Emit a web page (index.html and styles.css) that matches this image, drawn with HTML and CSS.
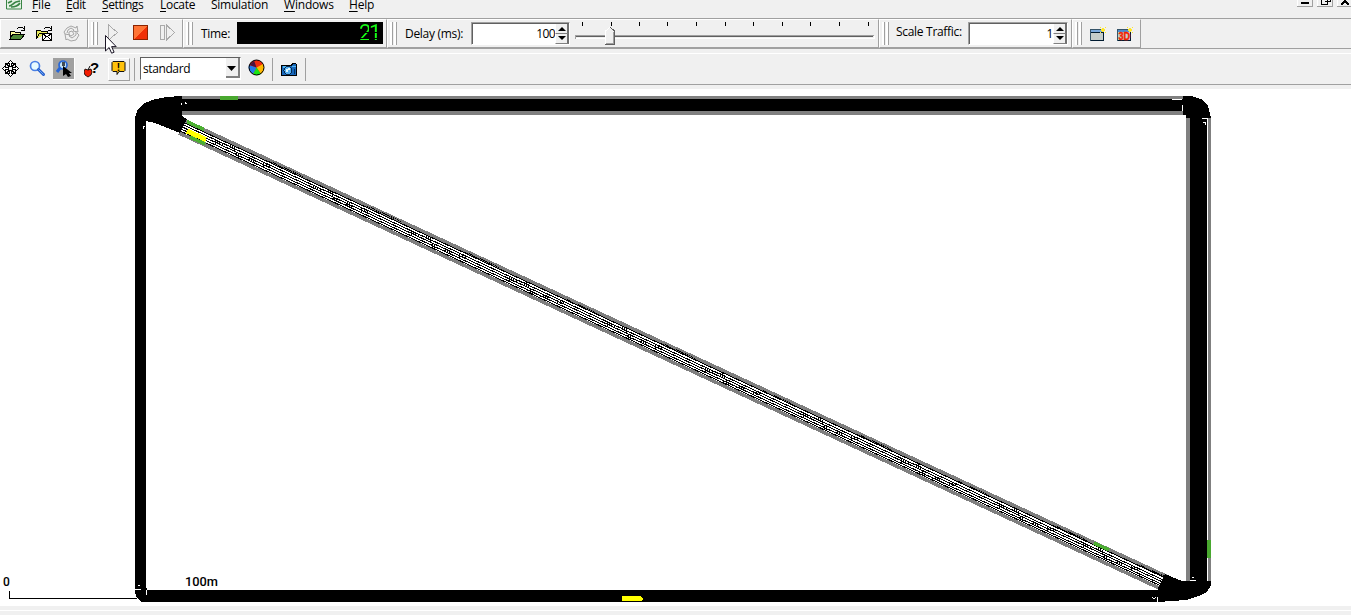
FILE: index.html
```html
<!DOCTYPE html>
<html lang="en">
<head>
<meta charset="utf-8">
<title>Traffic simulation</title>
<link rel="stylesheet" href="styles.css">
</head>
<body>
<nav class="menubar">
  <svg class="app-icon" width="17" height="10" viewBox="0 0 17 10"><path d="M.5 0v9h15V0" fill="#e4f1e4" stroke="#398444"/><path d="M2 3l4-2M3 6c3 0 4-3 7-4l4-1M5 7c4 0 7-1 9-4" fill="none" stroke="#398444" stroke-width="1.700"/></svg>
  <span class="file"><u>F</u>ile</span><span class="edit"><u>E</u>dit</span><span class="settings"><u>S</u>ettings</span><span class="locate"><u>L</u>ocate</span><span class="simulation">Simulation</span><span class="windows"><u>W</u>indows</span><span class="help"><u>H</u>elp</span>
  <div class="window-buttons">
    <svg width="54" height="7" viewBox="0 0 54 7" shape-rendering="crispEdges"><path d="M.5 0v6M20.500 0v6M40.500 0v6" stroke="#fff"/><path d="M0 6.500h15.500V0M20 6.500h15.500V0M40 6.500h16" stroke="#a0a0a0" fill="none"/><path d="M4 2h8v2H4z"/><path d="M24.500 0v4.500h6V0M28 1.500h5.500V0" fill="none" stroke="#000"/><path d="M44 5l4-4 4 4M48 1V0" fill="none" stroke="#000" stroke-width="2"/></svg>
  </div>
</nav>

<div class="toolbar main-tools">
  <section class="group g-file">
    <svg class="i-open" width="17" height="16" viewBox="0 0 17 16" shape-rendering="crispEdges"><path d="M1 13V5h4l1 1h5v3" fill="#ffff9c" stroke="#000"/><path d="M1 13l3-5h12l-4 5z" fill="#4e8736" stroke="#000"/><path d="M8 3l2-2h3l2 2M15 0v4h-3" fill="none" stroke="#000"/></svg>
    <svg class="i-openset" width="17" height="16" viewBox="0 0 17 16" shape-rendering="crispEdges"><path d="M.5 12.500v-8h4l1 1h6v2M.5 12.500l3-5h4" fill="#e5e95c" stroke="#000"/><path d="M6.500 7.500h9v7h-9z" fill="#fff" stroke="#000"/><path d="M7 8l4 3 4-3M7 14l3-3M15 14l-3-3M8 3l2-2h3l2 2M15 0v4h-3" fill="none" stroke="#000"/></svg>
    <svg class="i-reload" width="17" height="17" viewBox="0 0 17 17"><g fill="none" stroke="#a6a6a6"><path d="M2 9l-1-2 3-4 4-2 5 2 1-2 1 6-5-1 1-1-3-2-3 2-1 3M14 8l2 2-3 5-5 1-4-2-1 1-1-6 5 1-1 1 3 2 4-3v-3"/><path d="M6 7l3-1 2 3-3 2-2-1z"/></g></svg>
  </section>
  <section class="group g-run">
    <i class="grip"></i>
    <div class="play-slot">
      <svg class="i-play" width="17" height="17" viewBox="0 0 17 17" shape-rendering="crispEdges"><path d="M3.500 1l9 7.500-9 7.500z" fill="none" stroke="#aaa"/></svg>
      <svg class="pointer" width="12" height="19" viewBox="0 0 12 19"><path d="M.5.5v15.500l3.600-3.500 2.500 5.700 2.500-1-2.500-5.600h4.600z" fill="#fff" stroke="#1b1626"/></svg>
    </div>
    <svg class="i-stop" width="16" height="16" viewBox="0 0 16 16" shape-rendering="crispEdges"><path d="M.5.5h14v14H.5z" fill="#ff7435"/><path d="M14 1v13H1z" fill="#f03006"/><path d="M.5.5h14v14H.5z" fill="none" stroke="#8b2300"/></svg>
    <svg class="i-step" width="17" height="17" viewBox="0 0 17 17" shape-rendering="crispEdges"><path d="M.500 1.500h4v14h-4zM6.500 1l8 7.500-8 7.500z" fill="none" stroke="#aaa"/></svg>
  </section>
  <section class="group g-time"><i class="grip"></i><label>Time:</label><div class="lcd"><span class="two">2</span><span class="one">1</span></div></section>
  <section class="group g-delay">
    <i class="grip"></i><label>Delay (ms):</label>
    <div class="spin"><span>100</span><div class="arrows"><b><svg width="10" height="5"><path d="M1 5h8L5 1z"/></svg></b><b><svg width="10" height="5"><path d="M1 0h8L5 4z"/></svg></b></div></div>
    <svg class="slider" width="302" height="24" viewBox="0 0 302 24" shape-rendering="crispEdges"><path d="M7.500 0v4M36.500 0v4M64.500 0v4M92.500 0v4M121.500 0v4M150.500 0v4M178.500 0v4M207.500 0v4M235.500 0v4M264.500 0v4M293.500 0v4" stroke="#000"/><path d="M0 17V13h299v1H1v3z" fill="#a0a0a0"/><path d="M1 14h297v1H1z" fill="#606060"/><path d="M1 16.500h298v-3" fill="none" stroke="#fff"/><path d="M30 23V9l5-5 4 4v15z" fill="#f0f0f0"/><path d="M30.500 23V9l5-4" fill="none" stroke="#fff"/><path d="M35 5l4.500 4v13.500H30" fill="none" stroke="#606060"/><path d="M38.500 10v11.500H31" fill="none" stroke="#a0a0a0"/></svg>
  </section>
  <section class="group g-scale">
    <i class="grip"></i><label>Scale Traffic:</label>
    <div class="spin"><span>1</span><div class="arrows"><b><svg width="10" height="5"><path d="M1 5h8L5 1z"/></svg></b><b><svg width="10" height="5"><path d="M1 0h8L5 4z"/></svg></b></div></div>
  </section>
  <section class="group g-view">
    <i class="grip"></i>
    <svg class="i-view" width="18" height="17" viewBox="0 0 18 17" shape-rendering="crispEdges"><path d="M.5 3.500h13v11H.5z" fill="#c5cdca" stroke="#355469"/><path d="M1 4h12v2H1z" fill="#7aa9dc"/><path d="M1 6.500h12M13.500 5v9.500H1" stroke="#001b30" fill="none"/><path d="M12 2h2v4h-2zM11 3h4v2h-4zM15 1h1v1h-1zM10 1h1v1h-1zM10 6h1v1h-1zM15 6h1v1h-1z" fill="#ffe72c"/></svg>
    <svg class="i-view3d" width="18" height="17" viewBox="0 0 18 17" shape-rendering="crispEdges"><path d="M.5 3.500h13v11H.5z" fill="#c5cdca" stroke="#355469"/><path d="M1 4h12v2H1z" fill="#4b8bd0"/><path d="M13.500 5v9.500H1" stroke="#001b30" fill="none"/><text x="1.500" y="14" class="three-d" textLength="11.500" lengthAdjust="spacingAndGlyphs">3D</text><path d="M12 2h2v4h-2zM11 3h4v2h-4zM15 1h1v1h-1zM10 1h1v1h-1zM15 6h1v1h-1z" fill="#ffe72c"/></svg>
  </section>
</div>

<div class="toolbar view-tools">
  <svg class="i-move" width="17" height="17" viewBox="0 0 17 17" shape-rendering="crispEdges"><path d="M8 0h1v1h1v1h1v1h1v1h-2v3H7V4H5V3h1V2h1V1h1zM8 17h1v-1h1v-1h1v-1h1v-1h-2v-3H7v3H5v1h1v1h1v1h1zM0 8v1h1v1h1v1h1v1h1v-2h3V7H4V5H3v1H2v1H1v1zM17 8v1h-1v1h-1v1h-1v1h-1v-2h-3V7h3V5h1v1h1v1h1v1z"/><path d="M8 1h1v5H8zM7 2h3v1H7zM8 11h1v5H8zM7 14h3v1H7zM1 8h5v1H1zM2 7h1v3H2zM11 8h5v1h-5zM14 7h1v3h-1zM8 8h1v1H8z" fill="#fff"/><path d="M3 3h2v1h1v1h1v2H6V6H5V5H3zM14 3h-2v1h-1v1h-1v2h1V6h1V5h2zM3 14h2v-1h1v-1h1v-2H6v1H5v1H3zM14 14h-2v-1h-1v-1h-1v-2h1v1h1v1h2z"/></svg>
  <svg class="i-zoom" width="17" height="17" viewBox="0 0 17 17"><circle cx="6" cy="6" r="4.500" fill="#e8fbff" stroke="#4a80e4" stroke-width="1.700"/><path d="M9.500 9.500l5 5" stroke="#245dcc" stroke-width="3" stroke-linecap="round"/><path d="M9.500 9.500l5 5" stroke="#70a9f5"/></svg>
  <div class="pressed"><svg width="21" height="21" viewBox="0 0 21 21"><path d="M7 10l-3 4" stroke="#2767d8" stroke-width="3"/><circle cx="10" cy="7" r="4" fill="#c5e3f7" stroke="#2767d8" stroke-width="1.700"/><path d="M9 4h3v4H9z" fill="#414b54"/><path d="M10 8v10l3-2 2 3 3-1-2-3h3z"/></svg></div>
  <svg class="i-help" width="17" height="17" viewBox="0 0 17 17"><path d="M1 8l3 1 3-1 1 3-1 3-3 2-3-2-1-3z" fill="#f21b00" stroke="#000" stroke-width=".8"/><path d="M4 9l2-4" stroke="#000"/><text x="6" y="12" class="query">?</text></svg>
  <div class="raised"><svg width="18" height="18" viewBox="0 0 18 18"><path d="M3 1.500h11l1 1v8l-1 1H9l-2 3v-3H3l-1-1v-8z" fill="#ffc20b" stroke="#111"/><text x="6.700" y="10.500" class="alert">!</text></svg></div>
  <i class="rule first-rule"></i>
  <div class="combo"><span>standard</span><b><svg width="11" height="6"><path d="M1 0h9L5.500 5z"/></svg></b></div>
  <svg class="i-wheel" width="18" height="18" viewBox="0 0 18 18"><circle cx="8.500" cy="8.500" r="7.500" fill="#f12b0d"/><path d="M8.500 8.500L15 5a7.500 7.500 0 01-2 10z" fill="#ffb900"/><path d="M8.500 8.500L13 15a7.500 7.500 0 01-8 0z" fill="#18e514"/><path d="M8.500 8.500L5 15A7.500 7.500 0 011 6z" fill="#227ded"/><path d="M8.500 8.500L1.500 6 6 1.500z" fill="#4c123e"/><circle cx="8.500" cy="8.500" r="7.500" fill="none" stroke="#000"/></svg>
  <i class="rule second-rule"></i>
  <svg class="i-camera" width="17" height="15" viewBox="0 0 17 15" shape-rendering="crispEdges"><path d="M.5 3.500h10l1-2h3l1 1v11H.5z" fill="#1767bb" stroke="#000"/><path d="M2 4h3v2H2zM11 4h4v1h-4z" fill="#50b6f1"/><circle cx="7" cy="8.500" r="4" fill="#55aef0" stroke="#08294c"/><path d="M5 7h2v3H5zM7 6h2v2H7z" fill="#dff8ff"/><path d="M13.500 7v5" stroke="#043364"/></svg>
  <i class="rule third-rule"></i>
</div>

<main class="network">
<svg width="1351" height="517" viewBox="0 89 1351 517" shape-rendering="crispEdges">
  <defs>
    <g id="lane-ticks">
      <path d="M215 140v4M217 141v3M219 142v3M222 143v3M230 145v3M232 145v4M234 147v4M236 152v4M238 154v3M233 153h4M240 156v1M249 157v4M251 158v4M253 160v3M246 159h4M263 163v4M266 163v4M269 165v2" stroke="#000"/>
      <path d="M286 168.500l17 8M269 161l22 10" stroke="#000" stroke-dasharray="1 1"/>
    </g>
  </defs>
  <path d="M181 96h1003v19H181z" fill="#808080"/><path d="M181 99h1005v12H181z"/>
  <path d="M1186 115h4v467h-4zM1208 118h3v463h-3z" fill="#808080"/><path d="M1190 112h17v473h-17z"/>
  <path d="M135 119h11v472h-11zM144 590h1018v12H144z"/>
  <g fill="none">
    <path d="M183 120L1166 576M179 133L1159 588" stroke="#808080" stroke-width="3.500"/>
    <path d="M182 121.800L1166 578.300M182 124.300L1165 580.800M181 126.400L1163 582.200M181 128.900L1162 584.400M180 130.900L1161 586" stroke="#000"/>
  </g>
  <use href="#lane-ticks"/><use href="#lane-ticks" x="98" y="45"/><use href="#lane-ticks" x="196" y="91"/><use href="#lane-ticks" x="294" y="137"/><use href="#lane-ticks" x="392" y="182"/><use href="#lane-ticks" x="490" y="228"/><use href="#lane-ticks" x="588" y="273"/><use href="#lane-ticks" x="686" y="319"/><use href="#lane-ticks" x="784" y="364"/><use href="#lane-ticks" x="868" y="403"/>
  <path d="M135 122v-4l2-7 6-7 9-4 14-3 16-1v20l5 3-7 14-25-10-9-2z"/>
  <path d="M1183 96h8l10 3 7 7 3 12h-25v-3h-3z"/>
  <path d="M1165 574l17 7h29v4l-4 7-8 4-13 4-28 2v-14zM135 588h12v14h-5l-5-4-2-5z"/>
  <path d="M181.500 103v2M185 103h2M185.500 102v2M143 126.500h2M143.500 127v2M1172 99.500h10M1182.500 105v6M1202 118.500h5M1203 122h2v3M1207.500 119v462M1190 580.500h6M1192 577h2M1157.500 597v5M1152 597l2 2 2-2M135 589.500h6M138 585.500h2M146.500 590v5" fill="none" stroke="#fff"/>
  <path d="M187 121.500l17 8M190 137l15 7M1094 543l15 7" stroke="#4caf32" stroke-width="3.500"/><path d="M187 131l19 8.500" stroke="#ff0" stroke-width="5"/>
  <path d="M220 96h18v4h-18zM1207 540h4v18h-4z" fill="#49a82f"/><path d="M622 596h18l3 2v2l-2 1h-19z" fill="#ff0"/>
  <path d="M9.500 591v7.500H137" fill="none" stroke="#000"/>
  <g class="scale-label"><text x="3" y="586">0</text><text x="185" y="586" textLength="33" lengthAdjust="spacingAndGlyphs">100m</text></g>
</svg>
</main>
<footer class="status"></footer>
</body>
</html>
```

FILE: styles.css
```css
* { box-sizing: border-box; }
body { margin: 0; width: 1351px; height: 615px; overflow: hidden; background: #f0f0f0; color: #000; font: 12px/16px "Open Sans", sans-serif; }
svg { display: block; flex: none; }
.menubar { height: 18px; display: flex; align-items: flex-start; }
.app-icon { margin: 0 9px 0 6px; }
.menubar span { line-height: 10px; white-space: nowrap; flex: none; }
.menubar u { text-underline-offset: 2px; }
.file { width: 34px; letter-spacing: -.1px; }
.edit { width: 36px; letter-spacing: -.4px; }
.settings { width: 58px; letter-spacing: -.4px; }
.locate { width: 51px; letter-spacing: -.3px; }
.simulation { width: 73px; letter-spacing: -.25px; }
.windows { width: 65px; letter-spacing: -.2px; }
.help { width: 40px; letter-spacing: -.2px; }
.window-buttons { margin-left: auto; width: 54px; }
.toolbar { display: flex; }
.main-tools { height: 31px; border-top: 1px solid #a0a0a0; border-bottom: 1px solid #a0a0a0; }
.group { flex: none; display: flex; align-items: flex-start; border: solid; border-width: 1px; border-color: #fff #a0a0a0 #a0a0a0 #fff; padding-top: 2px; }
.g-file { width: 88px; }
.g-run { width: 95px; }
.g-time { width: 204px; }
.g-delay { width: 492px; }
.g-scale { width: 193px; }
.g-view { width: 69px; }
.grip { flex: none; width: 7px; height: 23px; margin: 0 1px 0 2px; background: linear-gradient(90deg, #fff 2px, #a0a0a0 2px 3px, #f0f0f0 3px 4px, #fff 4px 6px, #a0a0a0 6px); }
.i-open { margin: 4px 0 0 8px; }
.i-openset { margin: 4px 0 0 10px; }
.i-reload { margin: 3px 0 0 10px; }
.play-slot { position: relative; width: 17px; margin: 2px 0 0 6px; }
.pointer { position: absolute; left: 0; top: 11px; }
.i-stop { margin: 3px 0 0 11px; }
.i-step { margin: 2px 0 0 11px; }
.group label { white-space: nowrap; letter-spacing: -.3px; margin: 4px 0 0 7px; flex: none; }
.g-time label { width: 36px; }
.lcd { width: 146px; height: 22px; background: #000; display: flex; justify-content: flex-end; padding: 1px 2px 0 0; }
.lcd span { color: transparent; background: linear-gradient(#16ff16 9px, #000 9px 10px, #16ff16 10px 15px, #000 15px 16px, #16ff16 16px); background-clip: text; font: 22px/20px "Liberation Mono", monospace; text-align: right; }
.lcd .two { width: 10px; font: 22px/20px "Liberation Sans Narrow", Roboto, sans-serif; }
.lcd .one { width: 12px; font: 22px/20px Roboto, sans-serif; }
.g-delay label { width: 66px; }
.spin { width: 98px; height: 23px; border: 1px solid #fff; border-top-color: #a0a0a0; border-left-color: #a0a0a0; box-shadow: inset 1px 1px #606060; background: #fff; display: flex; justify-content: flex-end; }
.spin > span { margin-top: 3px; letter-spacing: -.4px; }
.g-delay .spin > span { letter-spacing: -.6px; }
.arrows { width: 14px; padding-top: 1px; }
.arrows b { height: 10px; display: flex; justify-content: center; padding-top: 2px; background: #f0f0f0; border: solid; border-width: 0 2px 1px 1px; border-color: #fff #707070 #808080 #fff; }
.g-delay .spin { width: 99px; }
.slider { margin-left: 5px; }
.g-scale label { width: 72px; margin-top: 2px; margin-left: 6px; letter-spacing: -.3px; }
.g-scale .spin { width: 100px; }
.i-view { margin: 4px 0 0 7px; }
.i-view3d { margin: 4px 0 0 9px; }
.three-d { font: bold 10px "Liberation Sans", sans-serif; fill: #f31f00; stroke: #f31f00; stroke-width: .4px; }
.view-tools { height: 32px; margin-top: 4px; border-top: 1px solid #fff; border-bottom: 1px solid #a0a0a0; align-items: flex-start; }
.i-move { margin: 6px 1px 0 2px; }
.i-zoom { margin: 6px 0 0 9px; }
.pressed { width: 22px; height: 22px; margin: 4px 0 0 7px; background: #a0a0a0; border-right: 1px solid #fff; border-bottom: 1px solid #fff; }
.i-help { margin: 7px 0 0 9px; }
.query { font: bold 15px "Liberation Sans", sans-serif; }
.raised { width: 22px; height: 23px; margin: 4px 0 0 7px; border: 1px solid #a0a0a0; border-top-color: #fff; border-left-color: #fff; padding: 1px; }
.alert { font: bold 10px "Liberation Sans", sans-serif; }
.rule { width: 1px; height: 23px; background: #a0a0a0; margin-top: 4px; flex: none; }
.first-rule { margin-left: 4px; }
.combo { width: 101px; height: 23px; margin: 3px 0 0 5px; border: 1px solid #fff; border-left-color: #606060; border-top-color: #606060; background: #fff; display: flex; justify-content: space-between; }
.combo span { margin: 3px 0 0 2px; letter-spacing: -.4px; }
.combo b { width: 14px; height: 20px; border-right: 2px solid #808080; border-bottom: 2px solid #808080; background: #f0f0f0; padding-top: 8px; }
.i-wheel { margin: 5px 0 0 7px; }
.second-rule { margin-left: 6px; }
.i-camera { margin: 8px 0 0 8px; }
.third-rule { margin-left: 7px; }
.network { height: 517px; margin-top: 4px; background: #fff; }
.scale-label { font: 500 12px Roboto, "Liberation Sans", sans-serif; }
.status { height: 9px; border-top: 4px solid #f0f0f0; background: linear-gradient(#fff 1px, #f0f0f0 1px); }
```
